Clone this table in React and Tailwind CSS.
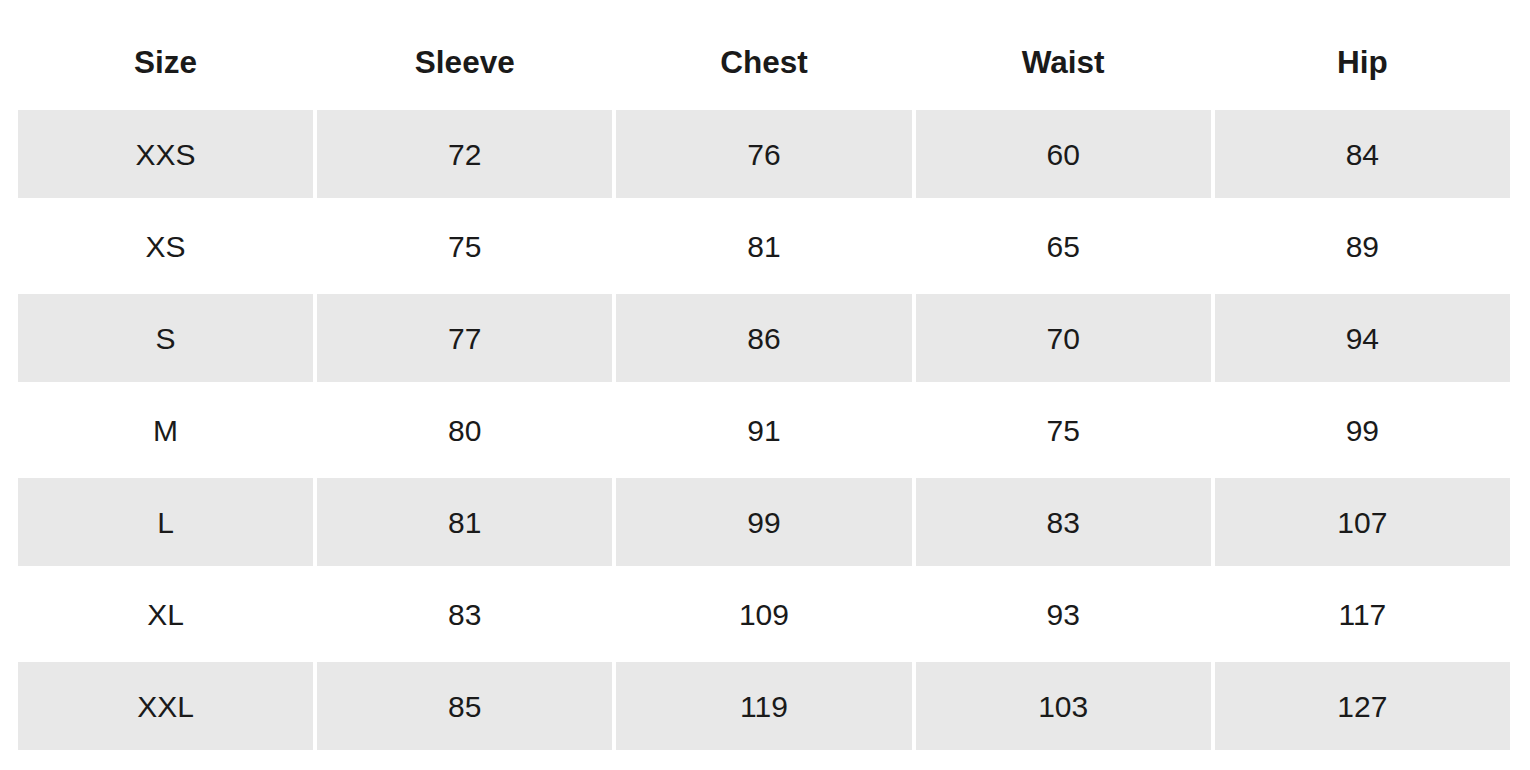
const headers = ["Size", "Sleeve", "Chest", "Waist", "Hip"];

const rows = [
  ["XXS", 72, 76, 60, 84],
  ["XS", 75, 81, 65, 89],
  ["S", 77, 86, 70, 94],
  ["M", 80, 91, 75, 99],
  ["L", 81, 99, 83, 107],
  ["XL", 83, 109, 93, 117],
  ["XXL", 85, 119, 103, 127],
];

export default function App() {
  return (
    <div className="min-h-screen bg-white pt-[14px] pl-[14px] font-['Liberation_Sans',Arial,sans-serif] text-[#1a1a1a]">
      <table className="w-[1500px] table-fixed border-separate border-spacing-[4px]">
        <thead>
          <tr>
            {headers.map((h) => (
              <th key={h} className="h-[88px] text-center text-[31.5px] font-bold pt-[2px]">
                {h}
              </th>
            ))}
          </tr>
        </thead>
        <tbody>
          {rows.map((r, i) => (
            <tr key={r[0]}>
              {r.map((v, j) => (
                <td
                  key={j}
                  className={`h-[88px] text-center text-[30px] ${i % 2 === 0 ? "bg-[#e8e8e8]" : "bg-white"}`}
                >
                  {v}
                </td>
              ))}
            </tr>
          ))}
        </tbody>
      </table>
    </div>
  );
}
